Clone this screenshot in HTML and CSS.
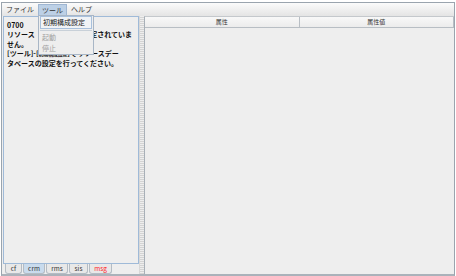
FILE: index.html
```html
<!DOCTYPE html>
<html lang="ja">
<head>
  <meta charset="UTF-8">
  <title>リソース管理</title>
  <link rel="stylesheet" href="styles.css">
</head>
<body>
  <div class="window">
    <div class="menubar">
      <span class="menu">ファイル</span>
      <span class="menu aberto">ツール</span>
      <span class="menu">ヘルプ</span>
    </div>

    <div class="main">
      <div class="esquerda">
        <div class="mensagem">
          <div>0700</div>
          <div>リソース<span class="oculto">データベースが設</span>定されていま</div>
          <div>せん。</div>
          <div>[ツール]-[<span class="menor">初期構成設定</span>]でリソースデー</div>
          <div>タベースの設定を行ってください。</div>
        </div>
        <div class="abas">
          <span class="aba">cf</span>
          <span class="aba ativa">crm</span>
          <span class="aba">rms</span>
          <span class="aba">sis</span>
          <span class="aba vermelha">msg</span>
        </div>
      </div>

      <div class="divisor"></div>

      <div class="direita">
        <div class="cabecalho">
          <span class="coluna">属性</span>
          <span class="coluna">属性値</span>
        </div>
        <div class="tabela"></div>
      </div>
    </div>

    <div class="dropdown">
      <div class="item marcado">初期構成設定</div>
      <div class="separador"></div>
      <div class="item desativado">起動</div>
      <div class="item desativado">停止</div>
    </div>
  </div>
</body>
</html>
```

FILE: styles.css
```css
body {
  margin: 0;
  padding: 2px 1px 0 1px;
  background: #fff;
  font-family: "Noto Sans CJK JP", "DejaVu Sans", sans-serif;
  width: 454px;
  height: 274px;
  overflow: hidden;
}
.window {
  position: relative;
  height: 271px;
  border: 1px solid #9aa4ae;
  border-bottom: 3px solid #aab2ba;
  background: #eeeeee;
  display: flex;
  flex-direction: column;
}
.menubar {
  height: 13px;
  display: flex;
  align-items: center;
  padding-left: 1px;
  background: linear-gradient(#fbfbfb, #e4e4e4);
}
.menu {
  font-size: 7px;
  color: #333;
  padding: 0 3px;
  height: 11px;
  line-height: 11px;
  margin-right: 1px;
}
.menu.aberto {
  background: #bcd0e6;
  border: 1px solid #9fb6d2;
  border-bottom: none;
}
.main {
  flex: 1;
  display: flex;
}
.esquerda {
  width: 136px;
  padding-left: 1px;
  display: flex;
  flex-direction: column;
}
.mensagem {
  flex: 1;
  border: 1px solid #9fbad8;
  background: #eeeeee;
  padding: 4px 3px;
  font-size: 7px;
  font-weight: bold;
  line-height: 9.4px;
  color: #111;
  white-space: nowrap;
}
.oculto {
  visibility: hidden;
}
.menor {
  font-size: 5px;
  letter-spacing: -0.2px;
}
.abas {
  height: 10px;
  display: flex;
  padding-left: 2px;
  gap: 1px;
}
.aba {
  font-size: 6.5px;
  color: #333;
  width: 20px;
  text-align: center;
  height: 9px;
  line-height: 9px;
  border: 1px solid #b4bcc4;
  border-top: none;
  background: #e8e8e8;
  border-radius: 0 0 3px 3px;
}
.aba:first-child {
  width: 15px;
}
.aba.ativa {
  background: #c9dbed;
}
.aba:nth-child(4) {
  width: 17px;
}
.aba.vermelha {
  color: #ff2020;
  width: 21px;
}
.divisor {
  width: 4px;
  background: repeating-linear-gradient(0deg, #d4d4d4 0 1px, #eeeeee 1px 2px);
  border-left: 1px solid #d8d8d8;
}
.direita {
  flex: 1;
  display: flex;
  flex-direction: column;
  border-left: 1px solid #a8b0b8;
  border-top: 1px solid #c4c8cc;
}
.cabecalho {
  height: 10px;
  display: flex;
  border-bottom: 1px solid #b8bec4;
  background: linear-gradient(#f8f8f8, #ececec);
}
.coluna {
  flex: 1;
  font-size: 6px;
  color: #333;
  text-align: center;
  line-height: 10px;
  border-right: 1px solid #b8bec4;
}
.tabela {
  flex: 1;
  background: #eeeeee;
}
.dropdown {
  position: absolute;
  left: 36px;
  top: 12px;
  width: 52px;
  height: 38px;
  background: #eeeeee;
  border: 1px solid #a8b6c6;
  padding: 0 1px;
}
.item {
  font-size: 7px;
  height: 11px;
  line-height: 11px;
  padding-left: 2px;
  color: #222;
}
.item.marcado {
  height: 11px;
  line-height: 11px;
  border: 1px solid #a8c0dc;
  background: #f0f3f6;
}
.item.desativado {
  color: #a0a0a0;
}
.separador {
  height: 1px;
  background: #c8d0d8;
  margin: 1px 0 1px;
}
```
